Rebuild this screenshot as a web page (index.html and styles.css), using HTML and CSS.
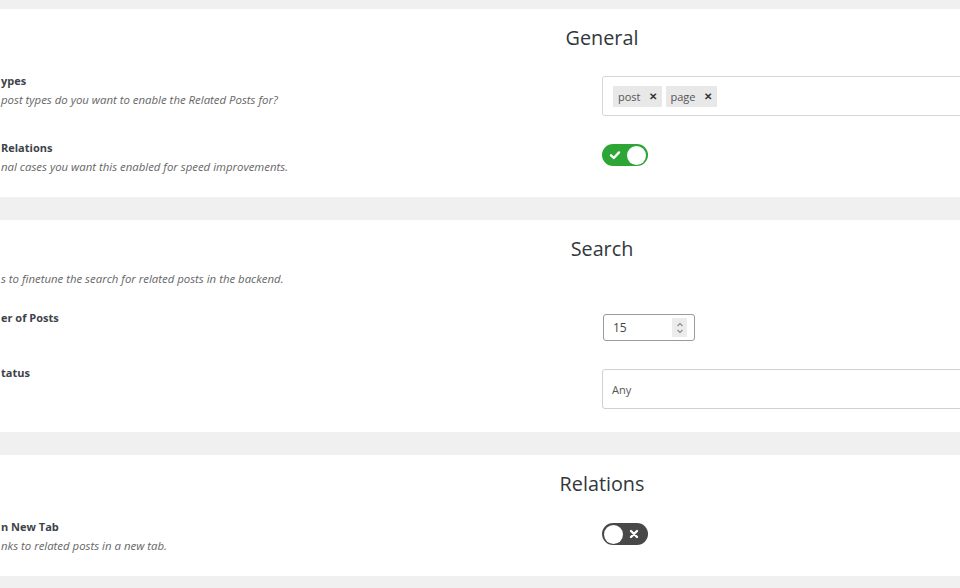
FILE: index.html
```html
<!DOCTYPE html>
<html lang="en">
<head>
<meta charset="utf-8">
<title>Related Posts Settings</title>
<link rel="stylesheet" href="styles.css">
</head>
<body>
<div class="page">
  <section class="card card-tight">
    <h2 class="card-title">General</h2>
    <div class="rows">
      <div class="row">
        <div class="row-text">
          <div class="label">ypes</div>
          <div class="desc">post types do you want to enable the Related Posts for?</div>
        </div>
        <div class="row-control">
          <div class="tagbox">
            <span class="tag">post <span class="tag-x">&#x2715;</span></span>
            <span class="tag">page <span class="tag-x">&#x2715;</span></span>
          </div>
        </div>
      </div>
      <div class="row">
        <div class="row-text">
          <div class="label">Relations</div>
          <div class="desc">nal cases you want this enabled for speed improvements.</div>
        </div>
        <div class="row-control">
          <span class="toggle on">
            <svg class="toggle-icon" viewBox="0 0 12 12" width="12" height="12"><path d="M2 6.3 L4.8 9 L10 3.4" fill="none" stroke="#fff" stroke-width="2.4" stroke-linecap="round" stroke-linejoin="round"/></svg>
            <span class="knob"></span>
          </span>
        </div>
      </div>
    </div>
  </section>

  <section class="card">
    <h2 class="card-title">Search</h2>
    <div class="intro">s to finetune the search for related posts in the backend.</div>
    <div class="rows">
      <div class="row">
        <div class="row-text">
          <div class="label">er of Posts</div>
        </div>
        <div class="row-control">
          <div class="number">
            <span class="number-val">15</span>
            <span class="spin">
              <svg viewBox="0 0 10 16" width="10" height="16"><path d="M2.5 6 L5 3.5 L7.5 6 M2.5 10 L5 12.5 L7.5 10" fill="none" stroke="#888" stroke-width="1.1"/></svg>
            </span>
          </div>
        </div>
      </div>
      <div class="row">
        <div class="row-text">
          <div class="label">tatus</div>
        </div>
        <div class="row-control">
          <div class="select">Any</div>
        </div>
      </div>
    </div>
  </section>

  <section class="card card-tight">
    <h2 class="card-title">Relations</h2>
    <div class="rows">
      <div class="row">
        <div class="row-text">
          <div class="label">n New Tab</div>
          <div class="desc">nks to related posts in a new tab.</div>
        </div>
        <div class="row-control">
          <span class="toggle off">
            <span class="knob"></span>
            <svg class="toggle-icon" viewBox="0 0 12 12" width="12" height="12"><path d="M3 3 L9 9 M9 3 L3 9" fill="none" stroke="#fff" stroke-width="2.4" stroke-linecap="round"/></svg>
          </span>
        </div>
      </div>
    </div>
  </section>
</div>
</body>
</html>
```

FILE: styles.css
```css
* { box-sizing: border-box; }
html, body {
  margin: 0;
  padding: 0;
  background: #f0f0f0;
  overflow: hidden;
  width: 960px;
  height: 588px;
}
body {
  font-family: "Open Sans", "Noto Sans", sans-serif;
  color: #3c434a;
}
.page {
  margin-left: -20px;
  width: 1244px;
  padding-top: 9px;
  display: flex;
  flex-direction: column;
  gap: 23px;
}
.card {
  background: #fff;
  padding: 15px 21px 23px;
}
.card-tight {
  padding-bottom: 21px;
}
.card-title {
  margin: 0;
  font-size: 19.8px;
  line-height: 27px;
  font-weight: 400;
  text-align: center;
  color: #32373c;
}
.intro {
  margin-top: 8px;
  font-size: 11.4px;
  line-height: 18px;
  font-style: italic;
  color: #666;
  white-space: nowrap;
}
.rows {
  margin-top: 22px;
  display: flex;
  flex-direction: column;
  gap: 24px;
}
.row {
  display: grid;
  grid-template-columns: 601px 601px;
  align-items: start;
}
.label {
  font-size: 11px;
  line-height: 16px;
  font-weight: 700;
  color: #3c434a;
  white-space: nowrap;
}
.desc {
  margin-top: 2px;
  font-size: 11.4px;
  line-height: 18px;
  font-style: italic;
  color: #666;
  white-space: nowrap;
}
.row-control {
  padding-top: 3px;
}
.tagbox {
  height: 40px;
  border: 1px solid #d6d6d6;
  border-radius: 3px;
  display: flex;
  align-items: center;
  gap: 4px;
  padding: 0 10px;
}
.tag {
  display: inline-flex;
  align-items: center;
  height: 21px;
  padding: 0 5px;
  background: #e8e8e8;
  font-size: 11px;
  color: #555;
}
.tag-x {
  font-size: 10px;
  font-weight: 700;
  color: #333;
  margin-left: 8px;
}
.toggle {
  display: flex;
  align-items: center;
  justify-content: space-between;
  width: 46px;
  height: 22px;
  margin-top: 1px;
  border-radius: 11px;
  padding: 0 2px;
}
.toggle.on {
  background: #2ea636;
}
.toggle.off {
  background: #484848;
}
.toggle-icon {
  margin: 0 4px 0 5px;
}
.toggle.off .toggle-icon {
  margin: 0 6px 0 4px;
}
.knob {
  width: 19px;
  height: 19px;
  border-radius: 50%;
  background: #fff;
}
.number {
  width: 92px;
  height: 27px;
  margin-top: 1px;
  margin-left: 1px;
  border: 1px solid #9a9a9a;
  border-radius: 3px;
  display: flex;
  align-items: center;
  justify-content: space-between;
  padding: 0 7px 0 9px;
  font-size: 12px;
  color: #444;
}
.spin {
  width: 15px;
  height: 19px;
  background: #ececec;
  display: flex;
  align-items: center;
  justify-content: center;
}
.select {
  height: 40px;
  margin-top: 1px;
  border: 1px solid #d0d0d0;
  border-radius: 3px;
  display: flex;
  align-items: center;
  padding: 0 9px;
  font-size: 11px;
  color: #555;
}
```
